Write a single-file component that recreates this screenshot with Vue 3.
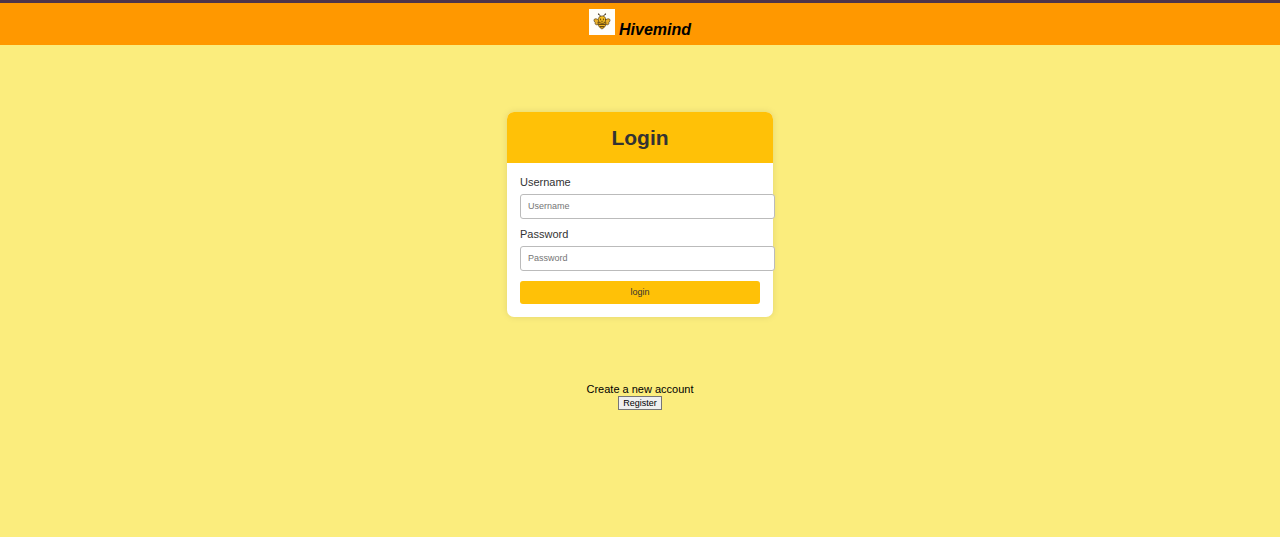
<script setup>
import { ref } from 'vue'

const username = ref('')
const password = ref('')
</script>

<template>
  <div class="page">
    <header class="topbar">
      <svg class="logo" viewBox="0 0 26 26" role="img" aria-label="Bee">
        <rect width="26" height="26" fill="#fffefa" />
        <g stroke="#3b2a12" stroke-width="0.6" stroke-linecap="round" stroke-linejoin="round">
          <path d="M11.6 7.6 Q11.4 5.6 9.6 5.2 M14.4 7.6 Q14.6 5.6 16.4 5.2" fill="none" stroke-width="0.8" />
          <path d="M10.2 11.4 C7.5 9 4.6 9.4 5 11.6 C5.1 12.6 5.8 13.2 6.2 13.4 C5.6 15.6 7.6 16.8 10 15Z" fill="#e9b02c" />
          <path d="M15.8 11.4 C18.5 9 21.4 9.4 21 11.6 C20.9 12.6 20.2 13.2 19.8 13.4 C20.4 15.6 18.4 16.8 16 15Z" fill="#e9b02c" />
          <path d="M9.2 13.2 H16.8 C17.5 16.2 15.6 18.8 13 20 C10.4 18.8 8.5 16.2 9.2 13.2Z" fill="#f5b820" />
          <circle cx="13" cy="10.6" r="3.7" fill="#f7be22" />
          <path d="M11.8 12.1 Q13 13.1 14.2 12.1" fill="none" />
        </g>
        <path d="M9.2 14.8 H16.8 L16.5 15.8 H9.5Z M10.2 17.2 H15.8 L14.8 18.2 H11.2Z" fill="#3b2a12" />
        <circle cx="9.6" cy="5.1" r="0.7" fill="#3b2a12" />
        <circle cx="16.4" cy="5.1" r="0.7" fill="#3b2a12" />
        <circle cx="11.6" cy="10.2" r="0.6" fill="#3b2a12" />
        <circle cx="14.4" cy="10.2" r="0.6" fill="#3b2a12" />
      </svg>
      <span class="brand">Hivemind</span>
    </header>

    <main class="content">
      <section class="card">
        <h1 class="card-title">Login</h1>
        <form class="form" @submit.prevent>
          <label class="label" for="username">Username</label>
          <input id="username" v-model="username" class="field" type="text" placeholder="Username" />
          <label class="label" for="password">Password</label>
          <input id="password" v-model="password" class="field" type="password" placeholder="Password" />
          <button class="submit" type="submit">login</button>
        </form>
      </section>

      <section class="signup">
        <div>Create a new account</div>
        <button class="register" type="button">Register</button>
      </section>
    </main>
  </div>
</template>

<style>
body {
  background: #fbed7d;
}
</style>

<style scoped>
.page {
  min-height: 100vh;
  background: #fbed7d;
  font-family: "Liberation Sans", Arial, sans-serif;
  font-size: 11px;
  line-height: 13px;
  color: #000;
}

.topbar {
  display: flex;
  justify-content: center;
  align-items: flex-start;
  gap: 4px;
  padding: 6px 0;
  border-top: 3px solid #4f3449;
  background: #ff9800;
}

.logo {
  width: 26px;
  height: 26px;
}

.brand {
  padding-top: 12px;
  font-size: 16px;
  line-height: 18px;
  font-weight: bold;
  font-style: italic;
}

.content {
  display: flex;
  flex-direction: column;
  align-items: center;
  gap: 66px;
  padding: 67px 16px 16px;
}

.card {
  width: 266px;
  max-width: 100%;
  border-radius: 7px;
  background: #fff;
  box-shadow: 0 0 7px rgba(0, 0, 0, 0.1);
  color: #333;
}

.card-title {
  margin: 0;
  padding: 13px;
  border-radius: 7px 7px 0 0;
  background: #ffc107;
  font-size: 21px;
  line-height: 25px;
  text-align: center;
}

.form {
  display: flex;
  flex-direction: column;
  padding: 13px;
}

.label {
  margin-bottom: 5px;
}

.field {
  box-sizing: content-box;
  width: 100%;
  height: 11px;
  margin: 0 0 9px;
  padding: 6px 6px 6px 7px;
  border: 1px solid #bbb;
  border-radius: 3px;
  background: #fff;
  font: 9px/11px "Liberation Sans", Arial, sans-serif;
}

.field::placeholder {
  color: #757575;
}

.submit {
  margin-top: 1px;
  padding: 6px;
  border: 0;
  border-radius: 3px;
  background: #ffc107;
  color: #333;
  font: 9px/11px "Liberation Sans", Arial, sans-serif;
}

.signup {
  text-align: center;
}

.register {
  display: block;
  margin: 0 auto;
  padding: 1px 4px;
  border: 1px solid #767676;
  border-radius: 0;
  background: #efefef;
  color: #000;
  font: 9px/10px "Liberation Sans", Arial, sans-serif;
}
</style>
